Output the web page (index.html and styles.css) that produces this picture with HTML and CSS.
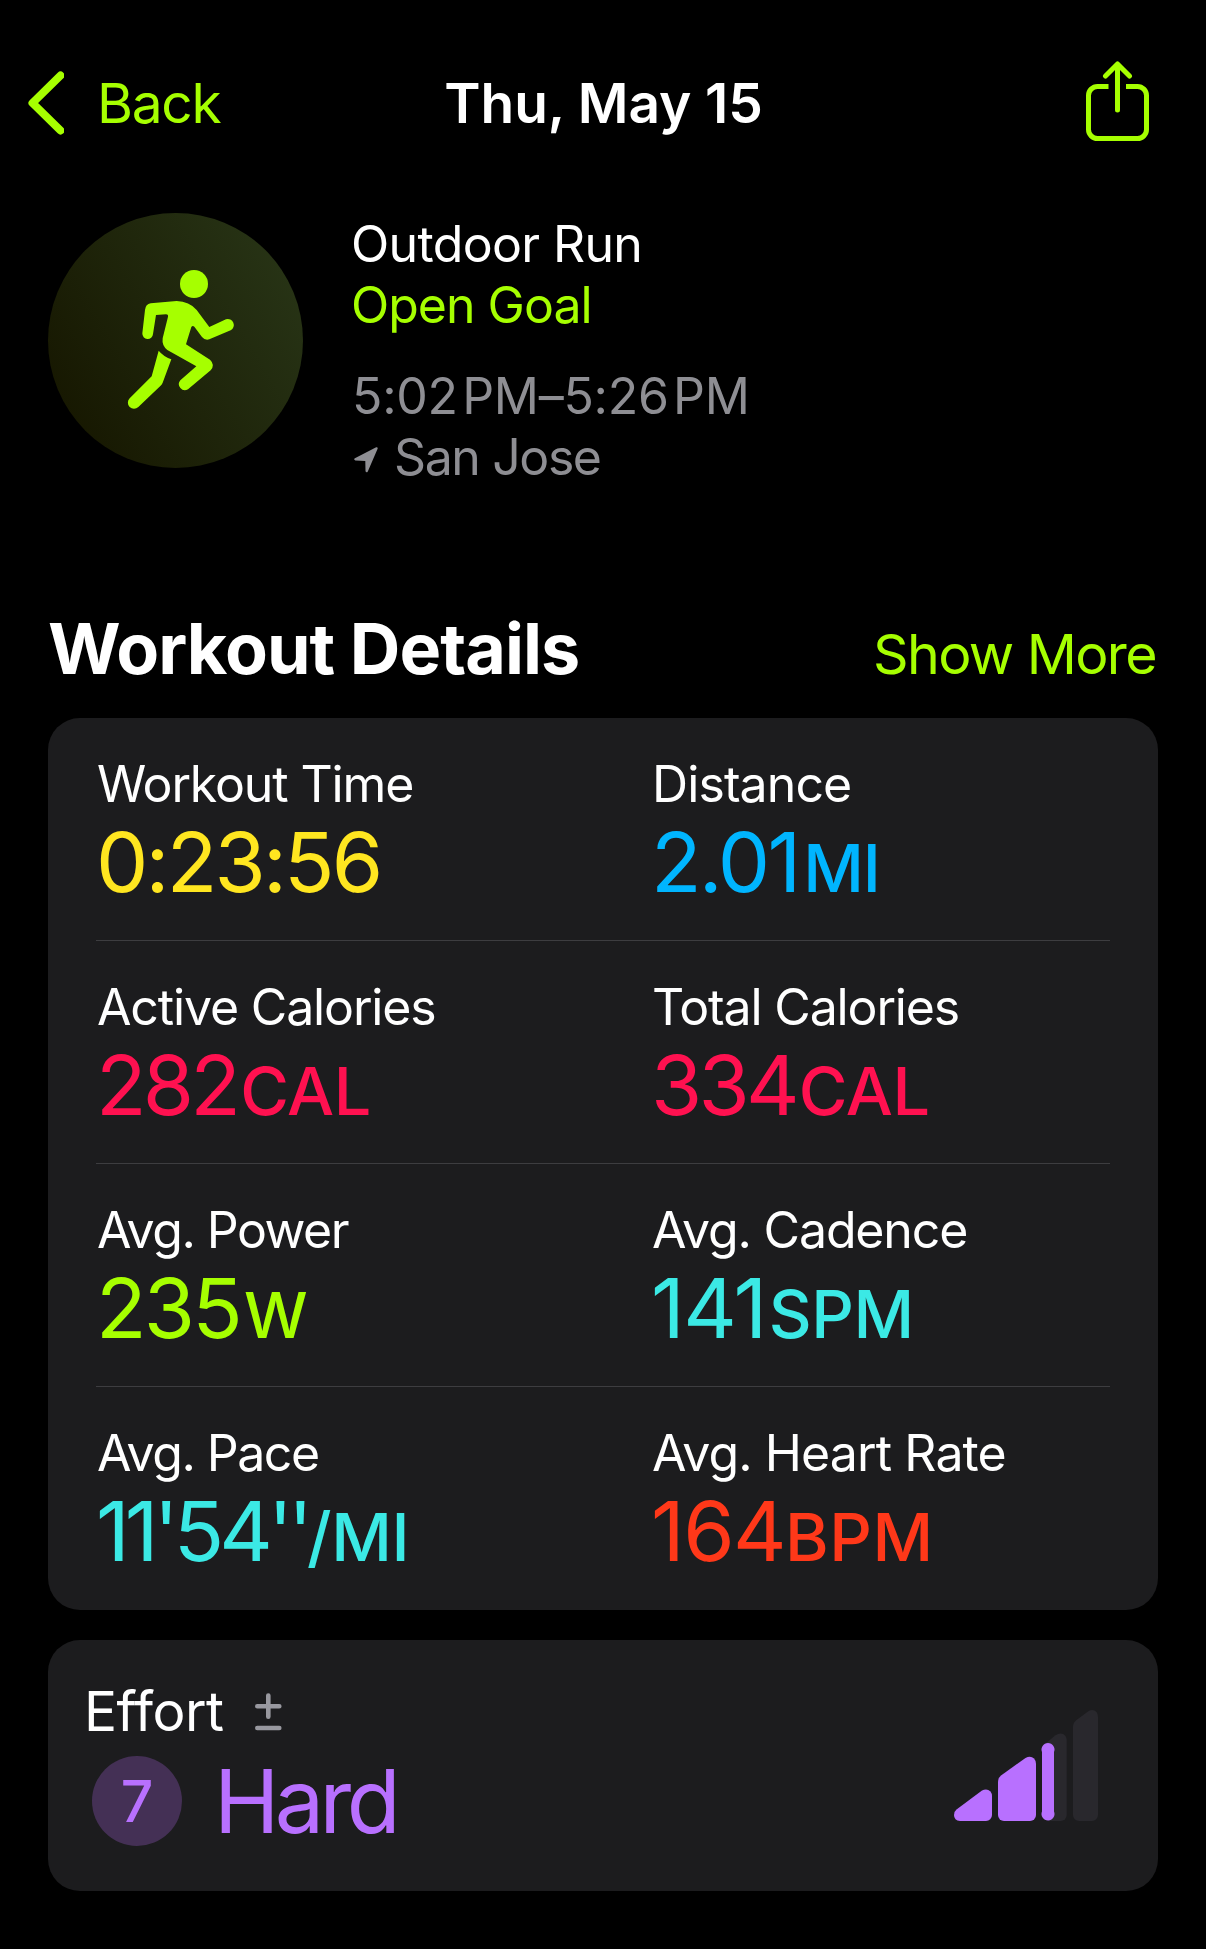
FILE: index.html
```html
<!DOCTYPE html>
<html lang="en">
<head>
  <meta charset="UTF-8" />
  <meta name="viewport" content="width=device-width,initial-scale=1" />
  <title>Outdoor Run</title>
  <link rel="stylesheet" href="styles.css">
</head>
<body>

  <!-- Nav bar -->
  <header class="nav">
    <a class="back">
      <svg width="36" height="64" viewBox="0 0 36 64" fill="none" stroke="currentColor" stroke-width="8" stroke-linecap="round" stroke-linejoin="round">
        <path d="M32.5 4.500 4.500 32l28 27.500"/>
      </svg>
      <span>Back</span>
    </a>
    <h1>Thu, May 15</h1>
    <svg class="share" width="63" height="80" viewBox="0 0 63 80" fill="none" stroke="currentColor" stroke-width="5" stroke-linecap="round" stroke-linejoin="round">
      <path d="M31.5 49V3M19.5 15l12-12 12 12"/>
      <path stroke-linecap="butt" d="M22.500 25.500H11.500A9 9 0 0 0 2.500 34.500V68.500A9 9 0 0 0 11.500 77.500H51.500A9 9 0 0 0 60.500 68.500V34.500A9 9 0 0 0 51.500 25.500H40"/>
    </svg>
  </header>

  <!-- Workout summary -->
  <section class="summary">
    <div class="avatar">
      <svg width="255" height="255" viewBox="54 39 765 765" fill="currentColor">
        <circle cx="492" cy="252" r="42"/>
        <path d="M362 310L440 303Q478 304 500 330L538 381 588 358A18 18 0 0 1 602 391L538 418Q525 422 516 411L493 380Q488 375 484 381L468 433 540 479Q556 494 542 511L474 568A18 18 0 0 1 451 541L499 499 412 450Q395 437 398 415L414 350Q415 343 408 343L378 345 369 402A16 16 0 0 1 337 400L345 330Q347 312 362 310Z"/>
        <path d="M386 452Q400 469 424 478L398 548Q396 553 391 558L325 621A18 18 0 0 1 299 595L365 529Z"/>
      </svg>
    </div>
    <div class="info">
      <p class="type">Outdoor Run</p>
      <p class="goal">Open Goal</p>
      <p class="when">5:02&hairsp;PM–5:26&hairsp;PM</p>
      <p class="where">
        <svg width="24" height="26" viewBox="0 0 24 26" fill="currentColor">
          <path d="M22.200 0.300Q24.200 0 23.500 1.900L13.800 24.500Q12.500 26.300 11.500 24.300L11.300 14 1.300 13.500Q-0.800 12.500 0.900 11.200Z"/>
        </svg>
        <span>San Jose</span>
      </p>
    </div>
  </section>

  <!-- Details -->
  <div class="section-head">
    <h2>Workout Details</h2>
    <a class="more">Show More</a>
  </div>
  <div class="card details">
    <div class="row">
      <div class="metric">
        <div class="label">Workout Time</div>
        <div class="value yellow"><span>0:23:56</span></div>
      </div>
      <div class="metric">
        <div class="label loose">Distance</div>
        <div class="value blue"><span>2.01</span><small class="miles">MI</small></div>
      </div>
    </div>
    <div class="row">
      <div class="metric">
        <div class="label">Active Calories</div>
        <div class="value pink"><span class="snug">282</span><small>CAL</small></div>
      </div>
      <div class="metric">
        <div class="label">Total Calories</div>
        <div class="value pink"><span class="snug">334</span><small>CAL</small></div>
      </div>
    </div>
    <div class="row">
      <div class="metric">
        <div class="label tight">Avg. Power</div>
        <div class="value lime"><span>235</span><small class="watt">W</small></div>
      </div>
      <div class="metric">
        <div class="label">Avg. Cadence</div>
        <div class="value cyan"><span class="open">141</span><small>SPM</small></div>
      </div>
    </div>
    <div class="row">
      <div class="metric">
        <div class="label tight">Avg. Pace</div>
        <div class="value cyan"><span class="pace">11'54''</span><small class="per-mile">/MI</small></div>
      </div>
      <div class="metric">
        <div class="label loose">Avg. Heart Rate</div>
        <div class="value red"><span class="open">164</span><small class="bpm">BPM</small></div>
      </div>
    </div>
  </div>

  <!-- Effort -->
  <div class="card effort">
    <div>
      <div class="effort-head">
        <span>Effort</span>
        <svg width="27" height="38" viewBox="0 0 27 38" fill="none" stroke="currentColor" stroke-width="4.600" stroke-linecap="round">
          <path d="M2.300 13.200h22M13.300 2.500v21.200M2.300 35h22"/>
        </svg>
      </div>
      <div class="effort-level">
        <span class="score">7</span>
        <span class="name">Hard</span>
      </div>
    </div>
    <svg class="bars" width="144" height="111" viewBox="0 0 144 111">
      <g fill="#29282d">
        <path d="M88 36.500 101.500 25.200Q107.500 21.500 111.500 26 112.700 28 112.700 30V105a6 6 0 0 1-6 6H94Z"/>
        <path d="M119 17Q119 12.500 122.500 10L134 1.500Q139-1.500 142.500 2 144 4 144 7V105a6 6 0 0 1-6 6H125a6 6 0 0 1-6-6Z"/>
      </g>
      <g fill="#b870ff">
        <path d="M2.500 99.500 28 80.500Q33 78 36.500 81.500 38 83.500 38 86V105a6 6 0 0 1-6 6H6Q0 110.500 0 105 0 101.500 2.500 99.500Z"/>
        <path d="M44 72Q44 68 47 65.500L71.500 48Q76.500 45.500 80 48.500 82 50.500 82 54V105a6 6 0 0 1-6 6H50a6 6 0 0 1-6-6Z"/>
        <path d="M88 42A6.500 6.500 0 1 1 100 42V101.500A6.500 6.500 0 1 1 88 101.500Z"/>
      </g>
    </svg>
  </div>

</body>
</html>
```
FILE: styles.css
```css
* { box-sizing: border-box; }
body {
  margin: 0;
  background: #000;
  color: #fff;
  font-family: Inter, sans-serif;
}
h1, h2, p { margin: 0; }
svg { display: block; flex: none; }

/* Nav bar */
.nav {
  display: grid; grid-template-columns: 1fr auto 1fr; align-items: center;
  height: 205px;
  padding: 0 57px 0 28px;
}
.back {
  display: flex; align-items: center; gap: 33px;
  font-size: 55px;
  letter-spacing: -1.3px;
  color: #a6ff00;
}
.nav h1 {
  margin-left: 30px;
  font-size: 55px;
  font-weight: 600;
  letter-spacing: -.1px;
}
.share { justify-self: end; margin-top: -3px; color: #a6ff00; }

/* Workout summary */
.summary {
  display: flex; gap: 48px;
  padding: 8px 48px 0;
}
.avatar {
  width: 255px; height: 255px;
  border-radius: 50%;
  background: linear-gradient(60deg, #171801 12%, #273315 88%);
  color: #a6ff00;
}
.info { padding-top: 1px; font-size: 50px; line-height: 61px; }
.type { letter-spacing: -.65px; }
.goal { letter-spacing: -1px; color: #a6ff00; }
.when { margin-top: 30px; padding-left: 1px; letter-spacing: -.25px; color: #8e8e93; }
.where {
  display: flex; align-items: center; gap: 16px;
  padding-left: 3px;
  letter-spacing: -1.4px;
  color: #8e8e93;
}
.where svg { margin-top: 4px; }

/* Section heading */
.section-head {
  display: flex; justify-content: space-between; align-items: baseline;
  margin: 119px 50px 27px 48px;
}
.section-head h2 {
  font-size: 70px; line-height: 84px;
  font-weight: 700;
  letter-spacing: -.95px;
}
.more { font-size: 55.5px; letter-spacing: -1.6px; color: #a6ff00; }

/* Cards */
.card {
  margin: 0 48px 30px;
  border-radius: 32px;
  background: #1c1c1e;
}
.details { padding: 0 48px; }
.row {
  display: grid; grid-template-columns: 555px 1fr;
  height: 223px;
  padding-top: 36px;
  border-bottom: 1px solid #3d3d40;
}
.row:last-child { border-bottom: 0; }
.label { font-size: 50px; line-height: 61px; letter-spacing: -1.15px; padding-left: 1px; }
.label.tight { letter-spacing: -1.5px; }
.label.loose { letter-spacing: -.9px; }

.value {
  display: flex; align-items: baseline;
  margin-top: 7px;
  font-size: 83px; line-height: 80px;
  letter-spacing: -2.8px;
}
.value small {
  margin-left: 3px;
  font-size: 66.5px;
  font-weight: 500;
  letter-spacing: -.4px;
}
.value .snug { letter-spacing: -3.8px; }
.value .open { letter-spacing: -1.6px; }
.value .pace { letter-spacing: -4.9px; }
.value .miles { margin-left: 5px; letter-spacing: -1.2px; }
.value .watt { margin-left: 4px; font-size: 63.5px; }
.value .per-mile { margin-left: -1px; }
.value .bpm { margin-left: 0; letter-spacing: .5px; }

.yellow { color: #ffe620; }
.blue { color: #00b5ff; }
.pink { color: #ff1150; }
.lime { color: #a6ff00; }
.cyan { color: #3be9e5; }
.red { color: #ff3819; }

/* Effort */
.effort {
  display: flex; justify-content: space-between; align-items: center;
  height: 251px;
  padding: 0 60px 0 36px;
}
.effort-head {
  display: flex; align-items: center; gap: 31px;
  font-size: 55px; line-height: 66px;
  letter-spacing: -.5px;
}
.effort-head svg { margin-top: 2px; color: #98989f; }
.effort-level {
  display: flex; align-items: center; gap: 32px;
  margin: 12px 0 7px 8px;
  color: #b870ff;
}
.score {
  width: 90px; height: 90px;
  border-radius: 50%;
  background: #443055;
  font-size: 57px; line-height: 91px;
  font-weight: 500;
  text-align: center;
}
.name { font-size: 88px; line-height: 88px; letter-spacing: -4.6px; }
```
